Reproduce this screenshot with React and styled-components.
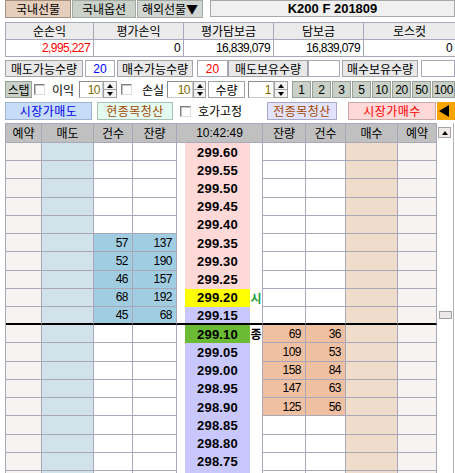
import React from 'react';
import styled, { createGlobalStyle } from 'styled-components';

const LINE = '#a8a8b8';
const KR = `"Noto Sans CJK KR", sans-serif`;
const NUM = `"Liberation Sans", "Noto Sans CJK KR", sans-serif`;

const GlobalStyle = createGlobalStyle`
  html, body { margin: 0; padding: 0; overflow: hidden; background: #fff; }
  body { font-family: ${NUM}; font-size: 12px; color: #000; }
  *, *::before, *::after { box-sizing: border-box; }
`;

const Page = styled.div`
  width: 455px;
  height: 473px;
  padding-left: 5px;
  overflow: hidden;
  display: flex;
  flex-direction: column;
`;

/* ---------- top bar ---------- */
const TopBar = styled.div`
  display: flex;
  height: 18px;
  flex-shrink: 0;
`;

const Tab = styled.div`
  width: ${p => p.$w}px;
  margin-left: ${p => p.$ml || 0}px;
  height: 18px;
  background: ${p => p.$bg};
  border: 1px solid ${p => p.$bd};
  display: flex;
  align-items: center;
  justify-content: center;
  font-family: ${KR};
  font-size: 12px;
  line-height: 1;
`;

const Title = styled.div`
  margin-left: auto;
  width: 245px;
  height: 17px;
  background: #f0f0f0;
  border: 1px solid #a8a8a8;
  display: flex;
  align-items: center;
  justify-content: center;
  font-family: "Liberation Sans", sans-serif;
  font-weight: bold;
  font-size: 13px;
`;

/* ---------- summary table ---------- */
const Summary = styled.div`
  margin-top: 4px;
  display: grid;
  grid-template-columns: 88px 90px 90px 90px 92px;
  border-top: 1px solid ${LINE};
  border-left: 1px solid ${LINE};
  flex-shrink: 0;
`;

const SumHead = styled.div`
  height: 17px;
  background: #ebebeb;
  border-right: 1px solid ${LINE};
  border-bottom: 1px solid ${LINE};
  display: flex;
  align-items: center;
  justify-content: center;
  font-family: ${KR};
  font-size: 12px;
  line-height: 1;
`;

const SumValue = styled.div`
  height: 17px;
  background: #fff;
  border-right: 1px solid ${LINE};
  border-bottom: 1px solid ${LINE};
  display: flex;
  align-items: center;
  justify-content: flex-end;
  padding-right: 3px;
  color: ${p => p.$color || '#000'};
  font-size: 12px;
  letter-spacing: -0.6px;
`;

/* ---------- quantity row ---------- */
const QtyRow = styled.div`
  margin-top: 3px;
  display: flex;
  height: 17px;
  flex-shrink: 0;
`;

const QtyLabel = styled.div`
  width: ${p => p.$w}px;
  margin-left: ${p => p.$ml || 0}px;
  background: #e8e8e8;
  border: 1px solid #a4a4a4;
  display: flex;
  align-items: center;
  justify-content: center;
  font-family: ${KR};
  font-size: 12px;
  line-height: 1;
`;

const QtyValue = styled.div`
  width: ${p => p.$w}px;
  margin-left: ${p => p.$ml || 0}px;
  background: #fff;
  border: 1px solid ${LINE};
  display: flex;
  align-items: center;
  justify-content: center;
  color: ${p => p.$color || '#000'};
  font-size: 12px;
`;

/* ---------- control row ---------- */
const ControlRow = styled.div`
  margin-top: 4px;
  display: flex;
  align-items: center;
  height: 17px;
  flex-shrink: 0;
`;

const GreenButton = styled.div`
  width: ${p => (p.$grow ? 'auto' : `${p.$w || 19}px`)};
  flex: ${p => (p.$grow ? 1 : 'none')};
  height: 17px;
  background: #c8d0c8;
  border: 1px solid #98a098;
  display: flex;
  align-items: center;
  justify-content: center;
  font-family: ${p => (p.$kr ? KR : NUM)};
  font-size: 12px;
  line-height: 1;
  letter-spacing: -0.4px;
`;

const Check = styled.span`
  width: 11px;
  height: 11px;
  margin-left: ${p => p.$ml || 0}px;
  flex-shrink: 0;
  background: #fff;
  border: 1px solid;
  border-color: #808080 #dcdcdc #dcdcdc #808080;
  box-shadow: inset 1px 1px 0 #c4c4c4;
`;

const Label = styled.span`
  margin-left: ${p => p.$ml || 0}px;
  width: ${p => p.$w}px;
  font-family: ${KR};
  font-size: 12px;
  line-height: 1;
  white-space: nowrap;
  flex-shrink: 0;
`;

const Spin = styled.div`
  display: flex;
  margin-left: ${p => p.$ml || 0}px;
  height: 17px;
  flex-shrink: 0;
`;

const SpinField = styled.div`
  width: ${p => p.$w}px;
  height: 17px;
  background: #fff;
  border: 1px solid;
  border-color: #8c8c8c #c8c8c8 #c8c8c8 #8c8c8c;
  display: flex;
  align-items: center;
  justify-content: flex-end;
  padding-right: 2px;
  color: #7d6a00;
  font-size: 12px;
  letter-spacing: -0.5px;
`;

const SpinArrows = styled.div`
  width: ${p => p.$w}px;
  display: flex;
  flex-direction: column;
`;

const SpinBtn = styled.div`
  flex: 1;
  background: #f2f2f2;
  border: 1px solid #a0a0a0;
  display: flex;
  align-items: center;
  justify-content: center;
  & + & { border-top: none; }
`;

const Tri = styled.span`
  width: 0;
  height: 0;
  border-left: 3px solid transparent;
  border-right: 3px solid transparent;
  ${p => (p.$down ? 'border-top: 4px solid #000;' : 'border-bottom: 4px solid #000;')}
`;

const FieldLabel = styled.div`
  width: ${p => p.$w}px;
  margin-left: ${p => p.$ml || 0}px;
  height: 17px;
  background: #fff;
  border: 1px solid #a4a4a4;
  display: flex;
  align-items: center;
  justify-content: center;
  font-family: ${KR};
  font-size: 12px;
  line-height: 1;
`;

const StepButtons = styled.div`
  display: flex;
  gap: 1px;
  margin-left: 4px;
  flex: 1;
`;

/* ---------- action row ---------- */
const ActionRow = styled.div`
  margin-top: 4px;
  display: flex;
  align-items: center;
  height: 18px;
  flex-shrink: 0;
`;

const ActionBtn = styled.div`
  width: ${p => p.$w}px;
  margin-left: ${p => p.$ml || 0}px;
  height: 18px;
  background: ${p => p.$bg};
  border: 1px solid ${p => p.$bd};
  color: ${p => p.$color};
  display: flex;
  align-items: center;
  justify-content: center;
  font-family: ${KR};
  font-size: 12px;
  line-height: 1;
  letter-spacing: 0.5px;
  flex-shrink: 0;
`;

const ArrowBtn = styled.div`
  width: 18px;
  margin-left: 1px;
  height: 18px;
  background: #f8a400;
  display: flex;
  align-items: center;
  justify-content: center;
  padding-right: 4px;
  &::before {
    content: '';
    width: 0;
    height: 0;
    border-top: 6px solid transparent;
    border-bottom: 6px solid transparent;
    border-right: 10px solid #000;
  }
`;

/* ---------- order book ---------- */
const Book = styled.div`
  display: flex;
  margin-top: 3px;
  flex-shrink: 0;
`;

const Grid = styled.div`
  display: grid;
  grid-template-columns: 36px 52px 39px 44px 86px 43px 40px 52px 39px;
  grid-template-rows: 19px;
  grid-auto-rows: 18.22px;
  border-left: 1px solid ${LINE};
  border-top: 1px solid ${LINE};
`;

const HeadCell = styled.div`
  background: #c0c0c0;
  border-right: 1px solid ${LINE};
  border-bottom: 1px solid ${LINE};
  display: flex;
  align-items: center;
  justify-content: center;
  font-family: ${p => (p.$num ? NUM : KR)};
  font-size: 12px;
  line-height: 1;
`;

const Cell = styled.div`
  background: ${p => p.$bg || '#fff'};
  border-right: 1px solid ${LINE};
  border-bottom: ${p => (p.$sep ? '2px solid #000' : `1px solid ${LINE}`)};
  display: flex;
  align-items: center;
  justify-content: flex-end;
  padding-right: 4px;
  font-size: 12px;
  letter-spacing: -0.5px;
`;

const PriceCell = styled.div`
  display: flex;
  background: #fff;
  border-right: 1px solid ${LINE};
  border-bottom: ${p => (p.$sep ? '2px solid #000' : 'none')};
  padding-left: 8px;
`;

const PriceBox = styled.div`
  width: 65px;
  background: ${p => p.$bg};
  display: flex;
  align-items: center;
  justify-content: center;
  font-family: "Liberation Sans", sans-serif;
  font-weight: bold;
  font-size: 13px;
  letter-spacing: 0.2px;
`;

const Marker = styled.div`
  flex: 1;
  display: flex;
  align-items: center;
  justify-content: center;
  color: ${p => p.$color};
  font-family: ${KR};
  font-size: 12px;
  font-weight: bold;
  line-height: 1;
`;

const Scroll = styled.div`
  width: 17px;
  border-right: 1px solid #b4b4b4;
  display: flex;
  flex-direction: column;
  align-items: flex-start;
  padding-left: 1px;
`;

const ScrollArrow = styled.div`
  margin-top: 4px;
  width: 13px;
  height: 11px;
  background: #f0ecec;
  border: 1px solid #a8a0a0;
  display: flex;
  align-items: center;
  justify-content: center;
`;

const ScrollThumb = styled.div`
  margin-top: 173px;
  margin-left: 1px;
  width: 13px;
  height: 8px;
  background: #ece8e8;
  border: 1px solid #a0a0a0;
`;

/* ---------- data ---------- */
const COLORS = {
  reserve: '#f6f3f0',
  sellCol: '#d2e2ea',
  buyCol: '#f0dccb',
  sellQty: '#a0cde1',
  buyQty: '#f0c0a2',
};

const sells = { 5: [57, 137], 6: [52, 190], 7: [46, 157], 8: [68, 192], 9: [45, 68] };
const buys = { 10: [69, 36], 11: [109, 53], 12: [158, 84], 13: [147, 63], 14: [125, 56] };

// 18 visible price levels, plus one more row whose top edge peeks in at the bottom
const rows = Array.from({ length: 19 }, (_, i) => {
  const price = i < 18 ? (299.6 - i * 0.05).toFixed(2) : '';
  let bg = '#c8c8ff';
  if (i < 8) bg = '#ffd8d8';
  else if (i === 8) bg = '#ffff00';
  else if (i === 10) bg = '#6cbb34';
  let marker = null;
  if (i === 8) marker = { t: '시', c: '#1fa040' };
  if (i === 10) marker = { t: '종', c: '#000' };
  return { i, price, bg, marker, sell: sells[i], buy: buys[i], sep: i === 9 };
});

const heads = ['예약', '매도', '건수', '잔량', '10:42:49', '잔량', '건수', '매수', '예약'];

export default function App() {
  return (
    <>
      <GlobalStyle />
      <Page>
        <TopBar>
          <Tab $w={66} $bg="#e6cebd" $bd="#a8907e">국내선물</Tab>
          <Tab $w={64} $ml={1} $bg="#c9d1c9" $bd="#a2aaa2">국내옵션</Tab>
          <Tab $w={66} $ml={1} $bg="#d2d6d2" $bd="#a2aaa2">해외선물▼</Tab>
          <Title>K200 F 201809</Title>
        </TopBar>

        <Summary>
          <SumHead>순손익</SumHead>
          <SumHead>평가손익</SumHead>
          <SumHead>평가담보금</SumHead>
          <SumHead>담보금</SumHead>
          <SumHead>로스컷</SumHead>
          <SumValue $color="#ff0000">2,995,227</SumValue>
          <SumValue>0</SumValue>
          <SumValue>16,839,079</SumValue>
          <SumValue>16,839,079</SumValue>
          <SumValue>0</SumValue>
        </Summary>

        <QtyRow>
          <QtyLabel $w={78}>매도가능수량</QtyLabel>
          <QtyValue $w={30} $ml={2} $color="#0000ff">20</QtyValue>
          <QtyLabel $w={76} $ml={2}>매수가능수량</QtyLabel>
          <QtyValue $w={31} $ml={4} $color="#ff0000">20</QtyValue>
          <QtyLabel $w={80}>매도보유수량</QtyLabel>
          <QtyValue $w={32} />
          <QtyLabel $w={76} $ml={2}>매수보유수량</QtyLabel>
          <QtyValue $w={34} $ml={3} />
        </QtyRow>

        <ControlRow>
          <GreenButton $w={27} $kr>스탭</GreenButton>
          <Check $ml={2} />
          <Label $ml={7} $w={24}>이익</Label>
          <Spin $ml={3}>
            <SpinField $w={24}>10</SpinField>
            <SpinArrows $w={14}>
              <SpinBtn><Tri /></SpinBtn>
              <SpinBtn><Tri $down /></SpinBtn>
            </SpinArrows>
          </Spin>
          <Check $ml={4} />
          <Label $ml={10} $w={24}>손실</Label>
          <Spin $ml={1}>
            <SpinField $w={26}>10</SpinField>
            <SpinArrows $w={13}>
              <SpinBtn><Tri /></SpinBtn>
              <SpinBtn><Tri $down /></SpinBtn>
            </SpinArrows>
          </Spin>
          <FieldLabel $w={37} $ml={2}>수량</FieldLabel>
          <Spin $ml={3}>
            <SpinField $w={26}>1</SpinField>
            <SpinArrows $w={14}>
              <SpinBtn><Tri /></SpinBtn>
              <SpinBtn><Tri $down /></SpinBtn>
            </SpinArrows>
          </Spin>
          <StepButtons>
            {['1', '2', '3', '5', '10', '20', '50'].map(n => (
              <GreenButton key={n}>{n}</GreenButton>
            ))}
            <GreenButton $grow>100</GreenButton>
          </StepButtons>
        </ControlRow>

        <ActionRow>
          <ActionBtn $w={87} $bg="#c6dcf8" $bd="#a4b4cc" $color="#0000e6">시장가매도</ActionBtn>
          <ActionBtn $w={76} $ml={5} $bg="#e2faf0" $bd="#a8c0b6" $color="#a44800">현종목청산</ActionBtn>
          <Check $ml={7} />
          <Label $ml={7} $w={48}>호가고정</Label>
          <ActionBtn $w={70} $ml={21} $bg="#e2e2fc" $bd="#a8a8c8" $color="#a44800">전종목청산</ActionBtn>
          <ActionBtn $w={88} $ml={11} $bg="#ffd8d8" $bd="#c8a8a8" $color="#ff0000">시장가매수</ActionBtn>
          <ArrowBtn />
        </ActionRow>

        <Book>
          <Grid>
            {heads.map((h, k) => (
              <HeadCell key={k} $num={k === 4}>{h}</HeadCell>
            ))}
            {rows.map(r => (
              <React.Fragment key={r.i}>
                <Cell $bg={COLORS.reserve} $sep={r.sep} />
                <Cell $bg={COLORS.sellCol} $sep={r.sep} />
                <Cell $bg={r.sell ? COLORS.sellQty : '#fff'} $sep={r.sep}>{r.sell && r.sell[0]}</Cell>
                <Cell $bg={r.sell ? COLORS.sellQty : '#fff'} $sep={r.sep}>{r.sell && r.sell[1]}</Cell>
                <PriceCell $sep={r.sep}>
                  <PriceBox $bg={r.bg}>{r.price}</PriceBox>
                  <Marker $color={r.marker ? r.marker.c : '#000'}>{r.marker && r.marker.t}</Marker>
                </PriceCell>
                <Cell $bg={r.buy ? COLORS.buyQty : '#fff'} $sep={r.sep}>{r.buy && r.buy[0]}</Cell>
                <Cell $bg={r.buy ? COLORS.buyQty : '#fff'} $sep={r.sep}>{r.buy && r.buy[1]}</Cell>
                <Cell $bg={COLORS.buyCol} $sep={r.sep} />
                <Cell $bg={COLORS.reserve} $sep={r.sep} />
              </React.Fragment>
            ))}
          </Grid>
          <Scroll>
            <ScrollArrow><Tri /></ScrollArrow>
            <ScrollThumb />
          </Scroll>
        </Book>
      </Page>
    </>
  );
}
